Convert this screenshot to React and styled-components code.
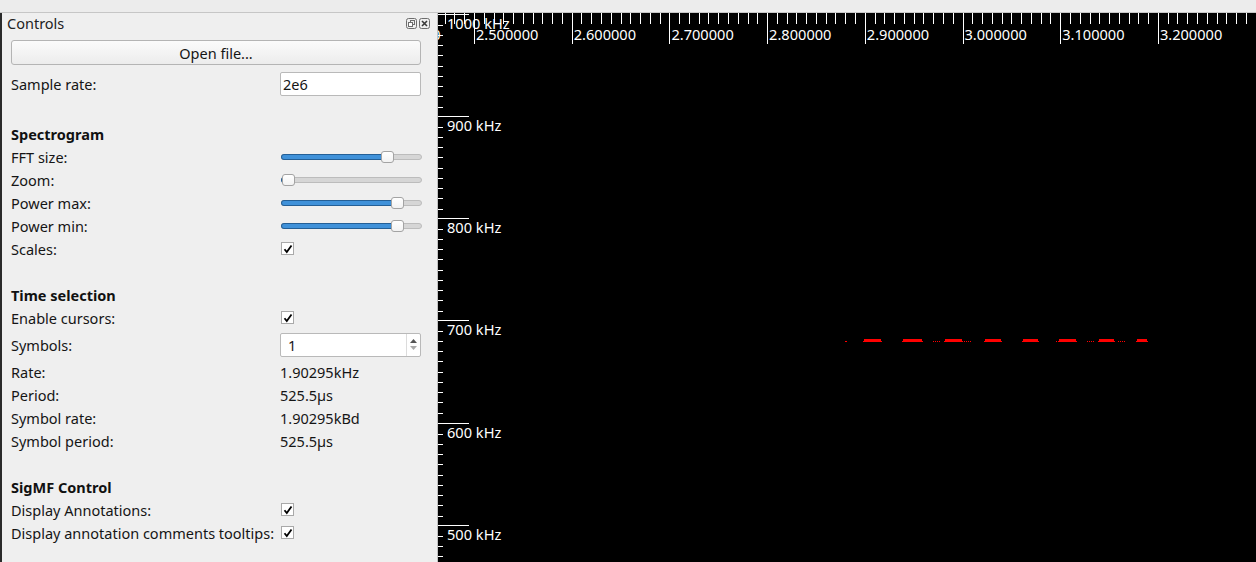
import React from 'react';
import styled, { createGlobalStyle } from 'styled-components';

const GlobalStyle = createGlobalStyle`
  html, body {
    margin: 0;
    padding: 0;
    background: #000;
    overflow: hidden;
  }
  body {
    font-family: "Noto Sans", "Open Sans", sans-serif;
    font-size: 14.5px;
    color: #151515;
  }
`;

const Window = styled.div`
  width: 1256px;
  height: 562px;
  display: flex;
  flex-direction: column;
  overflow: hidden;
`;

const TopStrip = styled.div`
  height: 12px;
  flex: none;
  background: #ececec;
  border-bottom: 1px solid #c6c6c6;
`;

const Main = styled.div`
  flex: 1;
  display: flex;
  min-height: 0;
`;

const Dock = styled.div`
  width: 435px;
  flex: none;
  background: #efefef;
  border-left: 2px solid #2a2a2a;
  border-right: 1px solid #c2c2c2;
  display: flex;
  flex-direction: column;
`;

const TitleBar = styled.div`
  height: 20px;
  display: flex;
  align-items: center;
  justify-content: space-between;
  padding: 0 7px 0 5px;
`;

const TitleText = styled.span`
  color: #222;
`;

const TitleButtons = styled.div`
  display: flex;
  gap: 2px;
`;

const Content = styled.div`
  padding: 7px 16px 0 9px;
  display: flex;
  flex-direction: column;
`;

const OpenButton = styled.button`
  height: 25px;
  width: 100%;
  border: 1px solid #b4b4b4;
  border-radius: 3px;
  background: linear-gradient(#fbfbfb, #ececec);
  font-family: inherit;
  font-size: 14.5px;
  color: #151515;
  padding: 0;
`;

const Section = styled.div`
  display: flex;
  flex-direction: column;
  margin-top: ${p => p.$gap || 0}px;
`;

const Heading = styled.div`
  height: 23px;
  display: flex;
  align-items: center;
  font-weight: bold;
  color: #111;
`;

const Row = styled.div`
  display: grid;
  grid-template-columns: 269px 1fr;
  align-items: center;
  height: ${p => p.$h || 23}px;
`;

const Label = styled.span`
  white-space: nowrap;
`;

const TextInput = styled.div`
  height: 22px;
  border: 1px solid #b9b9b9;
  border-radius: 2px;
  background: #fff;
  display: flex;
  align-items: center;
  padding-left: 2px;
`;

const SpinBox = styled.div`
  height: 22px;
  border: 1px solid #b9b9b9;
  border-radius: 2px;
  background: #fff;
  display: flex;
  align-items: center;
  justify-content: space-between;
  padding-left: 7px;
`;

const SpinArrows = styled.div`
  width: 13px;
  height: 100%;
  border-left: 1px solid #dcdcdc;
  display: flex;
  flex-direction: column;
  align-items: center;
  justify-content: center;
  gap: 3px;
`;

const Track = styled.div`
  position: relative;
  height: 4px;
  width: 139px;
  margin-left: 1px;
  border: 1px solid #bcbcbc;
  border-radius: 3px;
  background: #d6d6d6;
`;

const Fill = styled.div`
  height: 100%;
  background: #3f91d9;
  border-radius: 3px;
  box-shadow: 0 0 0 1px #245f96;
`;

const Handle = styled.div`
  position: absolute;
  top: -4px;
  width: 11px;
  height: 10px;
  border: 1px solid #a3a3a3;
  border-radius: 3px;
  background: linear-gradient(#ffffff, #f2f2f2);
`;

const Box = styled.div`
  width: 11px;
  height: 11px;
  border: 1px solid #a9a9a9;
  background: #fff;
  margin-left: 1px;
  display: flex;
  align-items: center;
  justify-content: center;
`;

const Spectrum = styled.div`
  flex: 1;
  background: #000;
  position: relative;
  overflow: hidden;
`;

function Slider({ pos }) {
  return (
    <Track>
      <Fill style={{ width: pos + 5 }} />
      <Handle style={{ left: pos - 1 }} />
    </Track>
  );
}

function Check() {
  return (
    <Box>
      <svg width="10" height="10" viewBox="0 0 10 10">
        <path d="M1.5 5.2 L3.8 8 L8.5 1.5" stroke="#000" strokeWidth="1.8" fill="none" />
      </svg>
    </Box>
  );
}

function FloatIcon() {
  return (
    <svg width="11" height="11" viewBox="0 0 11 11">
      <rect x="0.5" y="0.5" width="10" height="10" rx="2" fill="none" stroke="#6d6d6d" />
      <rect x="4.5" y="2.5" width="4" height="4" fill="none" stroke="#6d6d6d" />
      <rect x="2.5" y="4.5" width="4" height="4" fill="#fff" stroke="#6d6d6d" />
    </svg>
  );
}

function CloseIcon() {
  return (
    <svg width="11" height="11" viewBox="0 0 11 11">
      <rect x="0.5" y="0.5" width="10" height="10" rx="2" fill="none" stroke="#6d6d6d" />
      <path d="M3 3 L8 8 M8 3 L3 8" stroke="#3a3a3a" strokeWidth="1.6" />
    </svg>
  );
}

const W = 818;
const H = 549;
const X0 = 438;
const Y0 = 13;

function Plot() {
  const ticks = [];
  // horizontal (time) axis
  const xMajor = 474 - X0;
  const xStep = 97.7;
  for (let k = -1; k <= 8; k++) {
    const mx = xMajor + k * xStep;
    ticks.push(<line key={'xm' + k} x1={mx + 0.5} y1={0} x2={mx + 0.5} y2={31} stroke="#fff" />);
    for (let j = 1; j < 10; j++) {
      const x = Math.round(mx + j * xStep / 10) + 0.5;
      ticks.push(<line key={'xn' + k + j} x1={x} y1={0} x2={x} y2={11} stroke="#fff" />);
    }
    ticks.push(
      <text key={'xt' + k} x={mx + 2} y={26.5} fill="#fff" fontSize="14.6" fontFamily="Noto Sans, sans-serif">
        {(2.5 + k * 0.1).toFixed(6)}
      </text>
    );
  }
  // vertical (frequency) axis
  const yStep = 102.3;
  for (let k = 0; k <= 5; k++) {
    const my = Math.round(0.5 + k * yStep) + 0.5;
    ticks.push(<line key={'ym' + k} x1={0} y1={my} x2={31} y2={my} stroke="#fff" />);
    for (let j = 1; j < 10; j++) {
      const y = Math.round(my + j * yStep / 10) + 0.5;
      ticks.push(<line key={'yn' + k + j} x1={0} y1={y} x2={5} y2={y} stroke="#fff" />);
    }
    ticks.push(
      <text key={'yt' + k} x={9} y={my + 14} fill="#fff" fontSize="14.6" fontFamily="Noto Sans, sans-serif">
        {1000 - k * 100} kHz
      </text>
    );
  }
  const segs = [
    [845, 847], [863, 882], [902, 923], [933, 934], [935, 936], [937, 938], [939, 940],
    [944, 963], [964, 965], [966, 967], [968, 969], [970, 971], [984, 1002], [1022, 1039],
    [1056, 1057], [1058, 1077], [1087, 1088], [1089, 1090], [1091, 1092], [1093, 1094],
    [1098, 1115], [1118, 1119], [1120, 1121], [1122, 1123], [1124, 1125], [1136, 1148],
  ];
  return (
    <svg width={W} height={H} style={{ display: 'block' }} shapeRendering="crispEdges">
      {ticks}
      {segs.map(([a, b], i) => (
        <g key={'s' + i}>
          <rect x={a - X0} y={341 - Y0} width={b - a} height={1} fill="#ff0000" />
          {b - a > 4 && (
            <rect x={a - X0 + 1} y={339 - Y0} width={b - a - 2} height={2} fill="#ff0000" />
          )}
        </g>
      ))}
    </svg>
  );
}

export default function App() {
  return (
    <>
      <GlobalStyle />
      <Window>
        <TopStrip />
        <Main>
          <Dock>
            <TitleBar>
              <TitleText>Controls</TitleText>
              <TitleButtons>
                <FloatIcon />
                <CloseIcon />
              </TitleButtons>
            </TitleBar>
            <Content>
              <OpenButton>Open file...</OpenButton>
              <Section $gap={7}>
                <Row $h={24}>
                  <Label>Sample rate:</Label>
                  <TextInput>2e6</TextInput>
                </Row>
              </Section>
              <Section $gap={26}>
                <Heading>Spectrogram</Heading>
                <Row><Label>FFT size:</Label><Slider pos={100} /></Row>
                <Row><Label>Zoom:</Label><Slider pos={1} /></Row>
                <Row><Label>Power max:</Label><Slider pos={110} /></Row>
                <Row><Label>Power min:</Label><Slider pos={110} /></Row>
                <Row><Label>Scales:</Label><Check /></Row>
              </Section>
              <Section $gap={23}>
                <Heading>Time selection</Heading>
                <Row><Label>Enable cursors:</Label><Check /></Row>
                <Row $h={31}>
                  <Label>Symbols:</Label>
                  <SpinBox>
                    1
                    <SpinArrows>
                      <svg width="7" height="4" viewBox="0 0 7 4"><path d="M0 4 L3.5 0 L7 4 Z" fill="#555" /></svg>
                      <svg width="7" height="4" viewBox="0 0 7 4"><path d="M0 0 L3.5 4 L7 0 Z" fill="#aaa" /></svg>
                    </SpinArrows>
                  </SpinBox>
                </Row>
                <Row><Label>Rate:</Label><span>1.90295kHz</span></Row>
                <Row><Label>Period:</Label><span>525.5µs</span></Row>
                <Row><Label>Symbol rate:</Label><span>1.90295kBd</span></Row>
                <Row><Label>Symbol period:</Label><span>525.5µs</span></Row>
              </Section>
              <Section $gap={23}>
                <Heading>SigMF Control</Heading>
                <Row><Label>Display Annotations:</Label><Check /></Row>
                <Row><Label>Display annotation comments tooltips:</Label><Check /></Row>
              </Section>
            </Content>
          </Dock>
          <Spectrum>
            <Plot />
          </Spectrum>
        </Main>
      </Window>
    </>
  );
}
